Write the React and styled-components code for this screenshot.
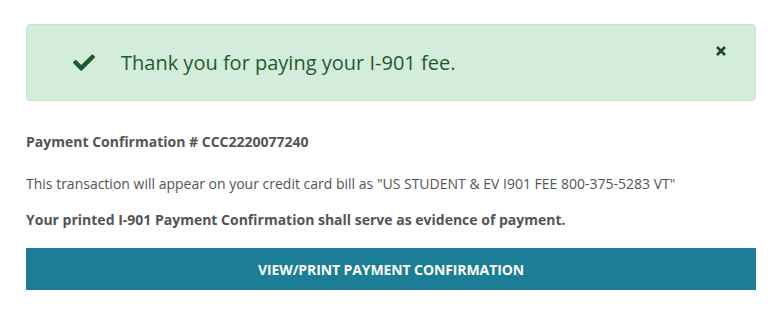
import React from "react";
import styled, { createGlobalStyle } from "styled-components";

const Global = createGlobalStyle`
  html, body { margin: 0; padding: 0; background: #fff; }
  body { font-family: "Open Sans", "Noto Sans", sans-serif; }
`;

const Page = styled.div`
  width: 775px;
  padding: 24px 19px 0 26px;
  box-sizing: border-box;
`;

const Alert = styled.div`
  position: relative;
  width: 730px;
  height: 77px;
  box-sizing: border-box;
  background: #d4edda;
  border: 1px solid #c9e7d0;
  border-radius: 4px;
  display: flex;
  align-items: center;
  padding-left: 46px;
  gap: 26px;
  color: #1f5a2c;
`;

const AlertText = styled.span`
  font-size: 20px;
  line-height: 1;
  padding-top: 1px;
`;

const Close = styled.button`
  position: absolute;
  top: 20px;
  right: 28px;
  border: 0;
  background: none;
  padding: 0;
  cursor: pointer;
  display: flex;
`;

const Body = styled.div`
  margin-top: 31px;
  color: #545454;
  font-size: 14px;
`;

const Para = styled.p`
  margin: 0 0 ${(p) => p.$mb}px 0;
  font-weight: ${(p) => (p.$bold ? 700 : 400)};
  line-height: 20px;
`;

const Button = styled.button`
  display: block;
  width: 730px;
  height: 42px;
  margin-top: 18px;
  border: 0;
  background: #1c7d97;
  color: #fff;
  font-family: "Open Sans", sans-serif;
  font-weight: 700;
  font-size: 14px;
  letter-spacing: -0.1px;
  text-transform: uppercase;
  cursor: pointer;
`;

const Check = () => (
  <svg width="22" height="17" viewBox="0 0 512 390" fill="#1d5a2a">
    <path d="M173.9 380.6L7.5 214.2c-10-10-10-26.2 0-36.2l36.2-36.2c10-10 26.2-10 36.2 0L192 253.9 432.1 13.8c10-10 26.2-10 36.2 0l36.2 36.2c10 10 10 26.2 0 36.2L210.1 380.6c-10 10-26.2 10-36.2 0z" />
  </svg>
);

const Times = () => (
  <svg width="12" height="12" viewBox="0 0 12 12">
    <path d="M2 2L10 10M10 2L2 10" stroke="#1d4a26" strokeWidth="2.6" strokeLinecap="butt" />
  </svg>
);

export default function App() {
  return (
    <>
      <Global />
      <Page>
        <Alert>
          <Check />
          <AlertText>Thank you for paying your I-901 fee.</AlertText>
          <Close aria-label="Close">
            <Times />
          </Close>
        </Alert>
        <Body>
          <Para $bold $mb={22}>Payment Confirmation # CCC2220077240</Para>
          <Para $mb={16}>
            This transaction will appear on your credit card bill as "US STUDENT &amp; EV I901 FEE 800-375-5283 VT"
          </Para>
          <Para $bold $mb={0}>Your printed I-901 Payment Confirmation shall serve as evidence of payment.</Para>
        </Body>
        <Button>View/Print Payment Confirmation</Button>
      </Page>
    </>
  );
}
